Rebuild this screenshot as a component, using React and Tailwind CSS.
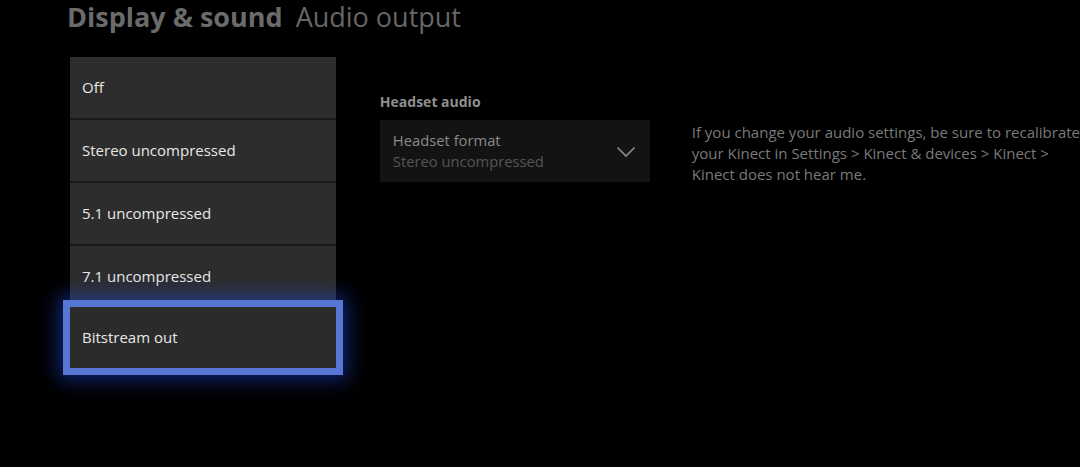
const OPTIONS = ['Off', 'Stereo uncompressed', '5.1 uncompressed', '7.1 uncompressed'];

export default function App() {
  return (
    <div className="w-[1080px] h-[467px] bg-black overflow-hidden font-['Open_Sans','Noto_Sans',sans-serif]">
      <div className="h-[57px] pl-[67px] flex items-start">
        <h1 className="text-[27px] leading-[34px] whitespace-nowrap">
          <span className="font-bold text-[#6b6b6b]">Display &amp; sound</span>
          <span className="ml-[13px] text-[#666666]">Audio output</span>
        </h1>
      </div>

      <div className="flex items-start">
        <div className="ml-[70px] w-[266px] flex flex-col bg-[#1a1a1a]">
          {OPTIONS.map((label, i) => (
            <div
              key={label}
              className={`h-[61px] bg-[#2d2d2d] flex items-center pl-[12px] text-[15px] font-medium text-[#e8e8e8] ${i > 0 ? 'mt-[2px]' : ''}`}
            >
              {label}
            </div>
          ))}
          <div className="relative z-10 -mt-[7px] -mx-[7px] h-[75px] border-[7px] border-[#5877d4] bg-[#2b2b2b] flex items-center pl-[12px] text-[15px] font-medium text-[#e8e8e8] shadow-[0_0_18px_5px_rgba(30,70,220,0.5)]">
            Bitstream out
          </div>
        </div>

        <div className="ml-[44px] w-[270px] pt-[35px]">
          <div className="text-[14px] font-bold text-[#8f8f8f] leading-[20px]">Headset audio</div>
          <div className="mt-[8px] h-[62px] bg-[#131313] flex items-center justify-between pl-[13px] pr-[14px]">
            <div className="flex flex-col leading-[21px]">
              <span className="text-[14.75px] text-[#8a8a8a]">Headset format</span>
              <span className="text-[14.75px] text-[#555555]">Stereo uncompressed</span>
            </div>
            <svg width="20" height="12" viewBox="0 0 20 12" fill="none" className="mt-[2px]">
              <path d="M1.5 1.5 L10 10 L18.5 1.5" stroke="#8c8c8c" strokeWidth="1.6" />
            </svg>
          </div>
        </div>

        <div className="ml-[42px] pt-[65px] text-[15px] leading-[21px] text-[#7a7a7a] whitespace-nowrap">
          If you change your audio settings, be sure to recalibrate
          <br />
          your Kinect in Settings &gt; Kinect &amp; devices &gt; Kinect &gt;
          <br />
          Kinect does not hear me.
        </div>
      </div>
    </div>
  );
}
